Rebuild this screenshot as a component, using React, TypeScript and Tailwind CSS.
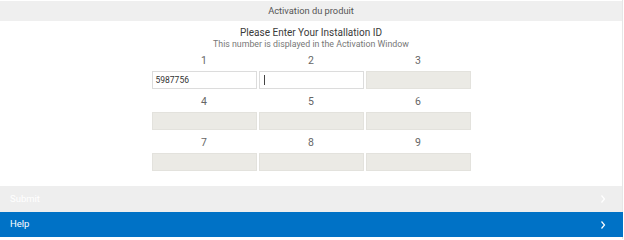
import * as React from 'react';

const FONT = { fontFamily: 'Roboto, "Open Sans", "Liberation Sans", sans-serif' };

type Field = { n: number; value?: string; active?: boolean };

const FIELDS: Field[] = [
  { n: 1, value: '5987756', active: true },
  { n: 2, value: '', active: true },
  { n: 3 },
  { n: 4 },
  { n: 5 },
  { n: 6 },
  { n: 7 },
  { n: 8 },
  { n: 9 },
];

function Chevron({ className }: { className?: string }) {
  return (
    <svg width="6" height="10" viewBox="0 0 6 10" className={className}>
      <polyline points="1.5,1.5 4.5,5 1.5,8.5" fill="none" stroke="currentColor" strokeWidth="1.2" />
    </svg>
  );
}

function IdBox({ field }: { field: Field }) {
  return (
    <div className="flex flex-col">
      <div className="h-[14px] leading-[14px] text-[10.5px] text-center text-[#666] mb-[3px]">{field.n}</div>
      {field.active ? (
        <div className="h-[18px] bg-white border border-[#dcdcdc] flex items-center px-[3px] text-[8.5px] text-[#333]">
          {field.value ? field.value : <span className="w-[1px] h-[10px] bg-[#444] ml-[1px]" />}
        </div>
      ) : (
        <div className="h-[18px] bg-[#ebeae5] border border-[#e3e2dd]" />
      )}
    </div>
  );
}

export default function App() {
  return (
    <div className="w-[624px] h-[239px] bg-white overflow-hidden" style={FONT}>
      <div className="w-[623px] h-full border-r border-[#e6e6e6] flex flex-col">
        <div className="mt-[1px] h-[20px] w-[622px] bg-[#efefef] flex items-center justify-center text-[9.3px] text-[#555]">
          Activation du produit
        </div>

        <div className="pt-[5px] text-center">
          <p className="text-[10px] leading-[13px] text-[#3a3a3a]">Please Enter Your Installation ID</p>
          <p className="text-[8.8px] leading-[11px] text-[#777]">This number is displayed in the Activation Window</p>
        </div>

        <div className="mt-[4px] mx-auto w-[319px] grid grid-cols-3 gap-x-[2px] gap-y-[6px]">
          {FIELDS.map((f) => (
            <IdBox key={f.n} field={f} />
          ))}
        </div>

        <div className="mt-auto mb-[2px]">
          <div className="h-[26px] w-[622px] bg-[#eeeeee] flex items-center justify-between pl-[10px] pr-[16px] text-[9.5px] text-white">
            <span>Submit</span>
            <Chevron />
          </div>
          <div className="h-[25px] w-[623px] bg-[#0072c6] flex items-center justify-between pl-[10px] pr-[17px] text-[9.5px] text-white">
            <span>Help</span>
            <Chevron />
          </div>
        </div>
      </div>
    </div>
  );
}
